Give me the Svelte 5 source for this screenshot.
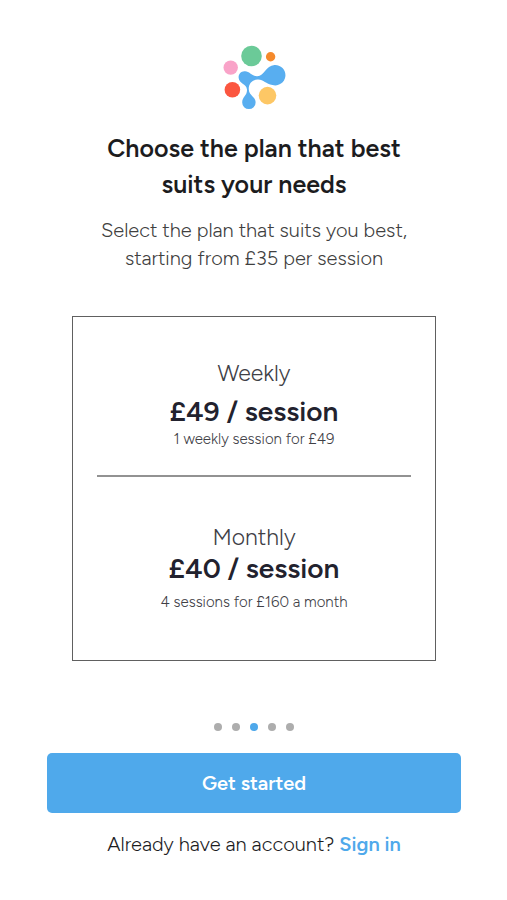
<script lang="ts">
	const plans = [
		{ id: 'weekly', name: 'Weekly', price: '£49 / session', note: '1 weekly session for £49' },
		{ id: 'monthly', name: 'Monthly', price: '£40 / session', note: '4 sessions for £160 a month' }
	];

	const steps = 5;
	const current = 2;
</script>

<main class="screen">
	<svg class="logo" width="64" height="66" viewBox="0 0 64 66" aria-hidden="true">
		<circle cx="29.5" cy="11" r="10.3" fill="#6bca98" />
		<circle cx="48.6" cy="11.7" r="4.7" fill="#f58a2c" />
		<circle cx="8.7" cy="22.6" r="7.2" fill="#f9a3c8" />
		<circle cx="10.4" cy="44.7" r="7.8" fill="#fb5640" />
		<circle cx="45.5" cy="50.6" r="8.8" fill="#fdc765" />
		<path
			d="M22.3 26.2C27.5 25.6 29 30.9 35 31.2C42.5 31.4 43.5 20.6 52.5 20A10.2 10.2 0 1 1 50.5 40C43.5 38.8 41.5 34 35.5 34.4C29 35 26.4 39.8 26.8 44.5C27.2 51 33.6 51.4 33.6 57.4A6.7 6.7 0 1 1 20.2 57.4C20.2 51.4 25.2 51 25 44.5C24.5 38.8 16.8 38.8 16.6 32.5C16.5 29 19 26.4 22.3 26.2Z"
			fill="#58aef0"
		/>
	</svg>

	<header class="intro">
		<h1>Choose the plan that best suits your needs</h1>
		<p>Select the plan that suits you best, starting from £35 per session</p>
	</header>

	<section class="plans" aria-label="Plans">
		{#each plans as plan (plan.id)}
			<article class="plan {plan.id}">
				<h2>{plan.name}</h2>
				<p class="price">{plan.price}</p>
				<p class="note">{plan.note}</p>
			</article>
		{/each}
	</section>

	<div class="dots" aria-hidden="true">
		{#each Array(steps) as _, i}
			<span class="dot" class:active={i === current}></span>
		{/each}
	</div>

	<button class="start" type="button">Get started</button>

	<p class="signin">Already have an account? <a href="#sign-in">Sign in</a></p>
</main>

<style>
	:global(body) {
		margin: 0;
		background: #fff;
	}

	.screen {
		display: flex;
		flex-direction: column;
		align-items: center;
		box-sizing: border-box;
		max-width: 560px;
		min-height: 100vh;
		margin: 0 auto;
		padding: 45px 46px 40px 47px;
		font-family: Figtree, Inter, sans-serif;
		color: #1c1c1e;
		text-align: center;
	}

	h1,
	h2,
	p {
		margin: 0;
	}

	.logo {
		display: block;
	}

	.intro {
		max-width: 330px;
		margin-top: 19px;
	}

	h1 {
		font-size: 25px;
		font-weight: 600;
		line-height: 36px;
	}

	.intro p {
		margin-top: 14px;
		font-size: 20px;
		font-weight: 300;
		line-height: 28px;
		color: #404040;
	}

	.plans {
		align-self: stretch;
		margin: 44px 25px 0;
		padding: 0 24px;
		border: 1px solid #606060;
	}

	.plan {
		padding: 42px 0 24px;
	}

	.plan + .plan {
		padding: 46px 0;
		border-top: 2px solid #929292;
	}

	h2 {
		font-size: 23px;
		font-weight: 300;
		line-height: 28px;
		color: #404046;
	}

	.price {
		font-size: 28px;
		font-weight: 600;
		line-height: 32px;
		color: #22222e;
	}

	.weekly .price {
		margin-top: 8px;
	}

	.note {
		font-size: 15px;
		font-weight: 300;
		line-height: 24px;
		color: #404046;
	}

	.monthly .price {
		margin-top: 1px;
	}

	.monthly .note {
		margin-top: 6px;
	}

	.dots {
		display: flex;
		gap: 10px;
		margin-top: 62px;
	}

	.dot {
		width: 8px;
		height: 8px;
		border-radius: 50%;
		background: #adadad;
	}

	.dot.active {
		background: #4ea8ea;
	}

	.start {
		align-self: stretch;
		height: 60px;
		margin-top: 22px;
		border: 0;
		border-radius: 5px;
		background: #4fa9eb;
		color: #fff;
		font: inherit;
		font-size: 20px;
		font-weight: 600;
		cursor: pointer;
	}

	.signin {
		margin-top: 17px;
		font-size: 20px;
		font-weight: 300;
		line-height: 28px;
	}

	.signin a {
		color: #4fa9eb;
		font-weight: 600;
		text-decoration: none;
	}
</style>
